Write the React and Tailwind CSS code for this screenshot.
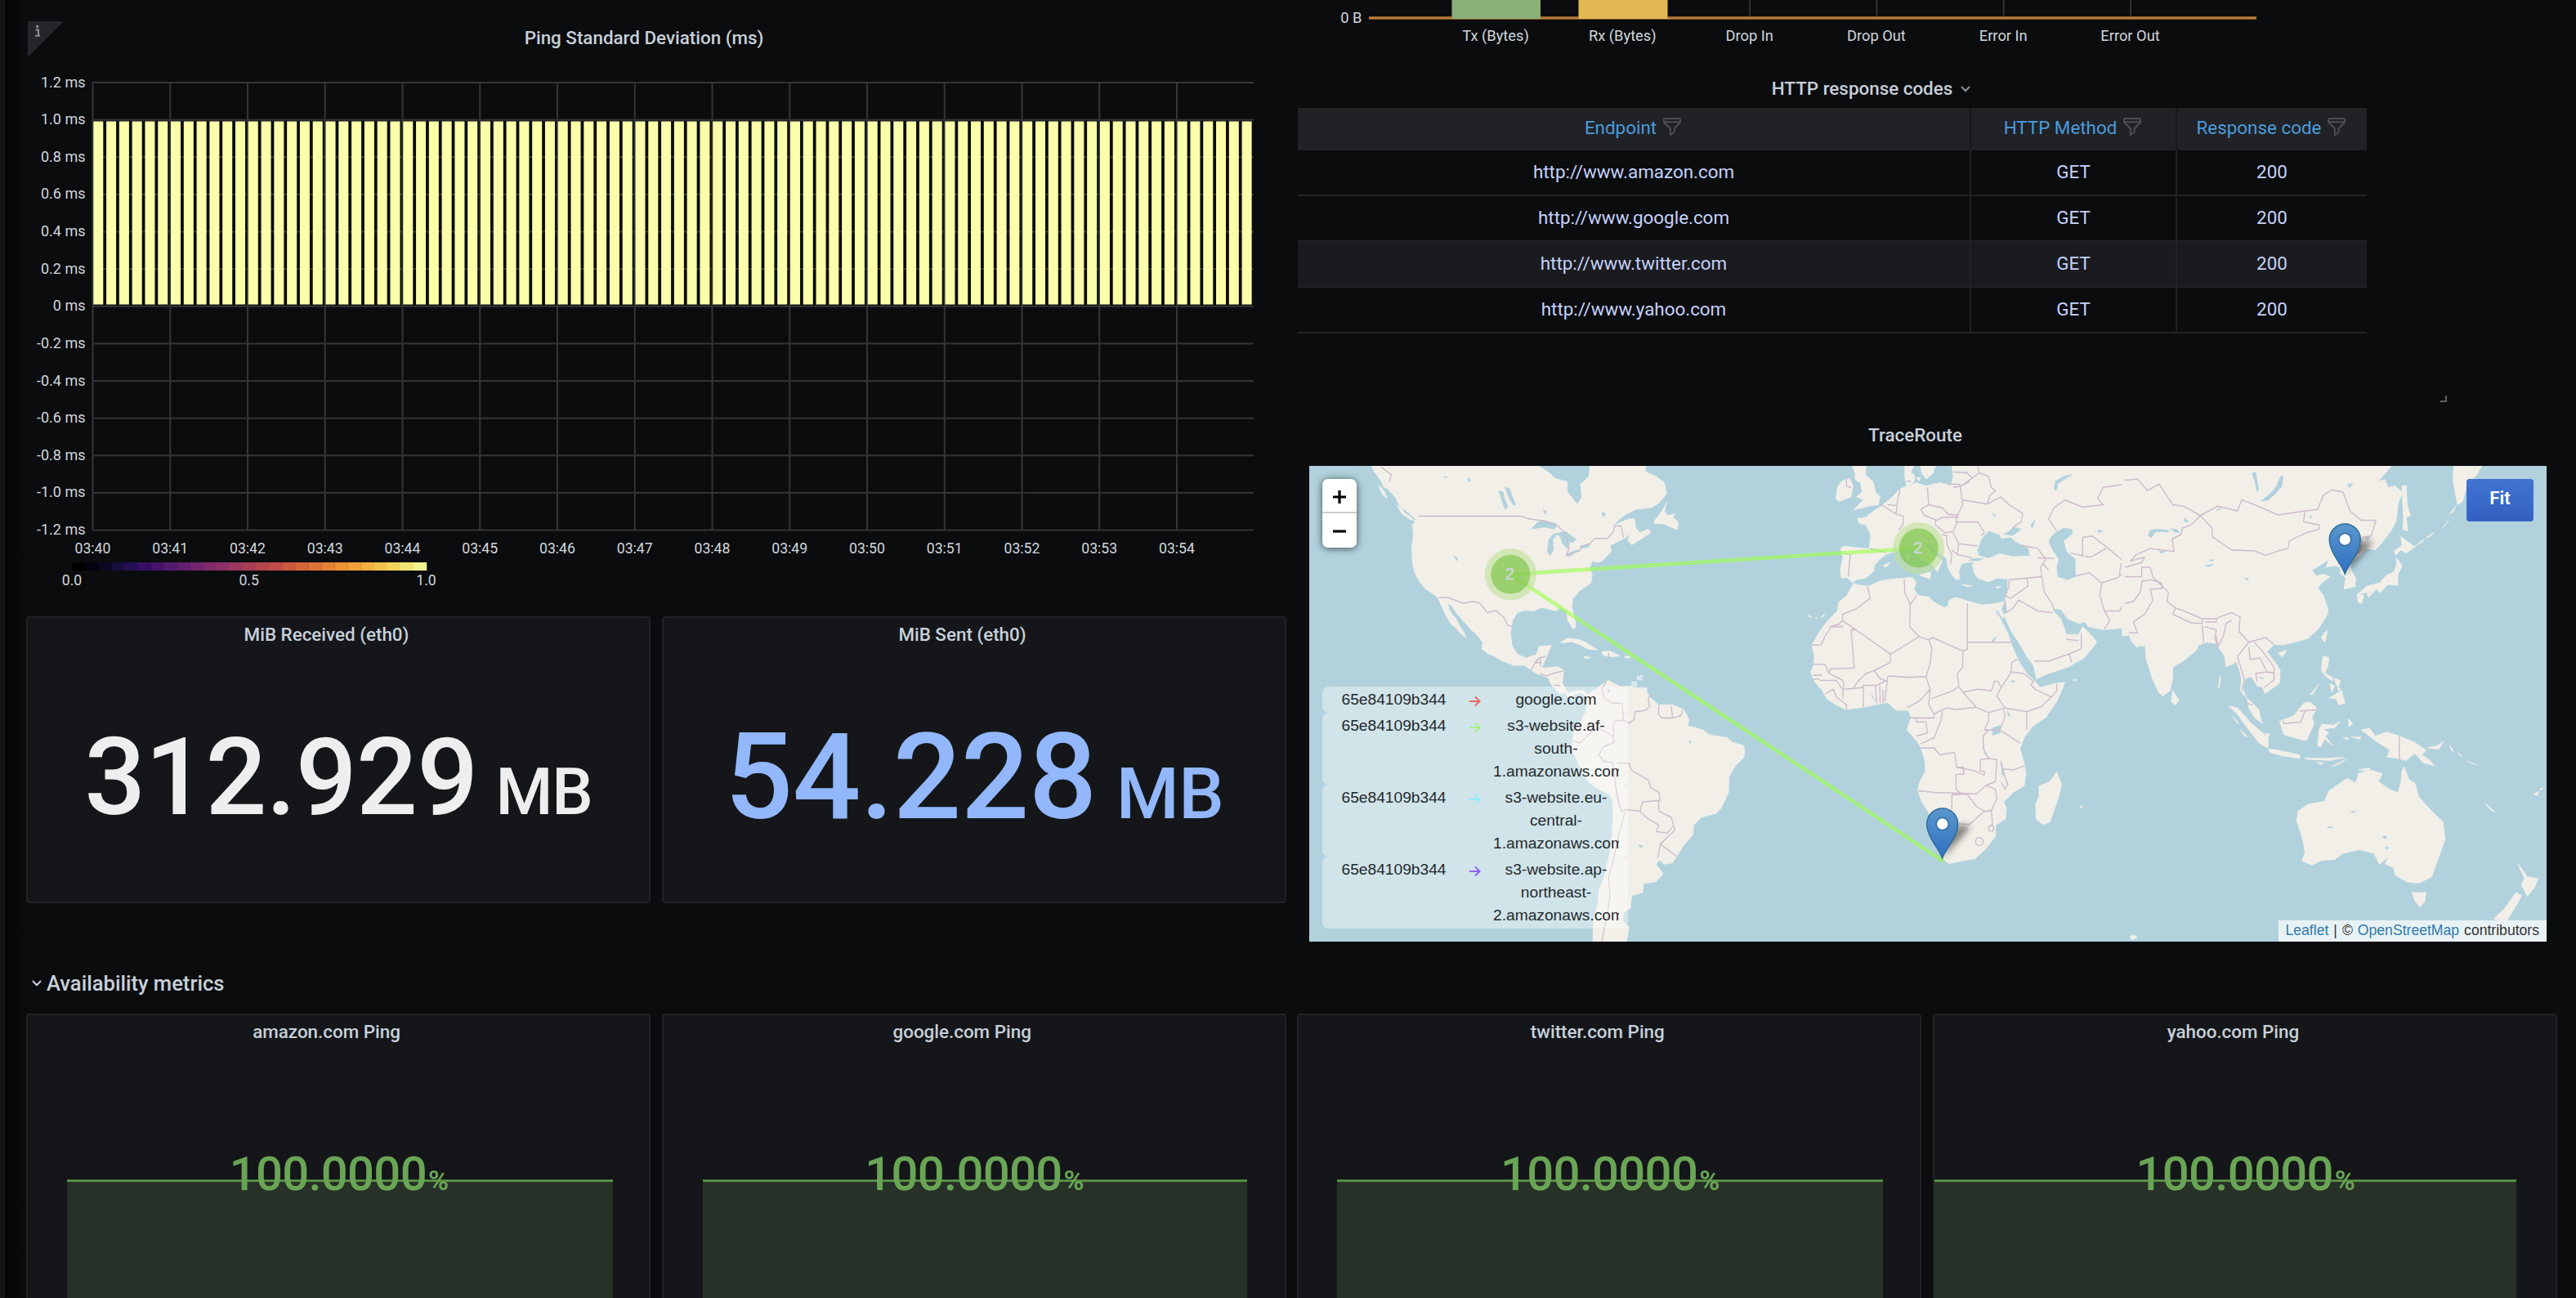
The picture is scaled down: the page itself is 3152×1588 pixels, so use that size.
import React from "react";

const times = Array.from({ length: 15 }, (_, i) => `03:${40 + i}`);
const levels = ["1.2", "1.0", "0.8", "0.6", "0.4", "0.2", "0", "-0.2", "-0.4", "-0.6", "-0.8", "-1.0", "-1.2"];
const scale = [
  "#000003", "#04030f", "#0b0822", "#180f3c", "#260e55", "#360f62", "#451469", "#53196d", "#611f6e",
  "#70256d", "#7f2a6a", "#8d3064", "#9b375e", "#a83e55", "#b5454b", "#c14e46", "#cc593f", "#d66538",
  "#de7337", "#e68233", "#ec9134", "#f1a03a", "#f1b040", "#f2c24b", "#f2d35c", "#f1e474", "#f1f58f",
];

const Chevron = ({ className }) => (
  <svg viewBox="0 0 12 12" className={className} fill="none" stroke="currentColor" strokeWidth="2" strokeLinecap="round" strokeLinejoin="round">
    <path d="M1.5 3.500 6 8.200l4.500-4.700" />
  </svg>
);

const Funnel = () => (
  <svg viewBox="0 0 22 22" className="h-[22px] w-[22px] shrink-0 text-[#4a4e54]" fill="none" stroke="currentColor" strokeWidth="2" strokeLinejoin="round">
    <path d="M2.200 1h17.600q1.200 0 1.200 1.200V5.500L13.700 13.200V17.500L8.800 21V13.200L1 5.500V2.200Q1 1 2.200 1zM1.500 5.200h19" />
  </svg>
);

function Panel({ title, className = "", children }) {
  return (
    <section className={`flex flex-col overflow-hidden rounded-[4px] border-2 border-[#202226] bg-[#141619] ${className}`}>
      <h2 className="mt-1 h-[33px] pr-[29px] text-center text-[22.4px] leading-8 font-medium text-[#c7d0d9]">{title}</h2>
      {children}
    </section>
  );
}

function PingChart() {
  const x0 = 113.5;
  const step = 94.75;
  return (
    <svg className="block h-[650px] w-[1542px]" viewBox="32 76 1542 650" fontSize="17.6" fill="#d0d7de" stroke="none">
      {levels.map((l, i) => {
        const y = 101 + i * 45.63;
        return (
          <g key={l} fontSize="18">
            <rect x="113" y={y - 1} width="1421" height="2" fill="#333538" />
            <text x="104.500" y={y + 5.500} textAnchor="end">{l} ms</text>
          </g>
        );
      })}
      {times.map((t, i) => (
        <g key={t}>
          <rect x={x0 + i * step - 1} y="101" width="2" height="547" fill="#333538" />
          <text x={x0 + i * step} y="677" textAnchor="middle">{t}</text>
        </g>
      ))}
      {Array.from({ length: 90 }, (_, i) => (
        <rect key={i} x={x0 + 0.8 + i * 15.79} y="148.500" width="12" height="224" fill="#fcffa9" />
      ))}
      {scale.map((c, i) => (
        <rect key={c} x={88 + i * 16.074} y="688" width="16.3" height="10" fill={c} />
      ))}
      <g textAnchor="middle">
        <text x="88" y="716">0.0</text>
        <text x="304.600" y="716">0.5</text>
        <text x="521.500" y="716">1.0</text>
      </g>
    </svg>
  );
}

function BytesChart() {
  const labels = ["Tx (Bytes)", "Rx (Bytes)", "Drop In", "Drop Out", "Error In", "Error Out"];
  return (
    <svg className="block h-[62px] w-[1310px]" viewBox="1588 0 1310 62" fontSize="18.3" fill="#d0d7de">
      {labels.map((l, i) => (
        <g key={l}>
          <rect x={1829.500 + i * 155.3} y="0" width="2" height="22" fill="#303235" />
          <text x={1830 + i * 155.3} y="49.500" textAnchor="middle">{l}</text>
        </g>
      ))}
      <rect x="1675" y="20" width="1086" height="4" fill="#8a5c30" />
      <rect x="1675" y="21" width="1086" height="2" fill="#b87a3c" />
      <rect x="1776.500" y="0" width="108.500" height="23" fill="#8ab078" />
      <rect x="1931.500" y="0" width="109" height="23" fill="#e3b752" />
      <text x="1666.500" y="27.500" textAnchor="end">0 B</text>
    </svg>
  );
}

const rows = ["http://www.amazon.com", "http://www.google.com", "http://www.twitter.com", "http://www.yahoo.com"];
const cols = "grid grid-cols-[824px_252px_232px] text-center text-[22.4px]";

function ResponseTable() {
  return (
    <div className="w-[1308px]">
      <div className={`${cols} h-[52px] bg-[#202226] text-[#4d9bdc]`}>
        {["Endpoint", "HTTP Method", "Response code"].map((h, i) => (
          <div key={h} className={`flex items-center justify-center gap-2 pr-0.5 pb-[3px] ${i < 2 ? "border-r-2 border-[#17181b]" : ""}`}>
            {h}
            <span className="pb-[3px]">
              <Funnel />
            </span>
          </div>
        ))}
      </div>
      {rows.map((r, i) => (
        <div key={r} className={`${cols} h-14 border-b-2 border-[#202226] leading-[53px] text-[#c5d2fb] ${i === 2 ? "bg-[#1a1b1f]" : ""}`}>
          <div className="border-r-2 border-[#202226]">{r}</div>
          <div className="border-r-2 border-[#202226]">GET</div>
          <div>200</div>
        </div>
      ))}
    </div>
  );
}

const americas = {
  land: "M265 26L275 45 300 75 310 95 325 100 340 115 355 130 365 150 385 175 410 190 425 205 415 215 418 250 412 290 415 340 425 370 440 395 465 422 490 435 505 445 512 455 525 480 535 500 555 530 575 545 590 560 612 577 605 560 590 540 575 515 560 500 550 485 545 465 560 475 575 495 595 515 625 545 655 570 672 590 670 612 690 625 715 635 745 650 790 665 825 663 850 678 870 690 890 695 915 705 920 720 940 740 955 755 975 750 985 765 1000 768 1010 757 1030 752 1050 762 1058 772 1055 790 1050 815 1035 840 1010 870 1003 900 1002 935 1020 970 1040 1010 1065 1040 1100 1060 1140 1078 1150 1100 1152 1150 1148 1200 1140 1260 1130 1300 1115 1350 1100 1380 1095 1430 1080 1470 1077 1550 1200 1550 1210 1500 1185 1480 1190 1455 1215 1440 1220 1400 1260 1390 1262 1362 1310 1355 1335 1330 1310 1300 1320 1285 1340 1300 1370 1295 1388 1270 1410 1240 1445 1205 1447 1175 1475 1150 1530 1137 1548 1120 1560 1098 1575 1070 1577 1020 1600 985 1630 960 1635 940 1630 920 1590 910 1570 895 1530 890 1505 885 1480 870 1450 862 1425 858 1430 835 1410 805 1370 790 1320 790 1290 770 1275 750 1275 735 1240 735 1210 730 1180 732 1150 720 1135 712 1110 725 1090 740 1075 745 1060 758 1045 745 1010 745 985 752 965 720 970 680 950 668 900 672 890 670 905 640 925 600 880 603 870 630 830 640 800 628 780 600 775 560 782 520 800 495 830 488 860 490 890 478 940 490 960 478 980 490 985 520 1005 548 1015 540 1010 510 1000 480 1003 450 1030 425 1070 400 1075 375 1065 350 1075 330 1095 335 1110 330 1145 300 1140 280 1165 270 1200 255 1215 240 1205 265 1220 278 1250 262 1290 240 1280 228 1250 240 1235 225 1230 195 1210 195 1170 210 1145 225 1170 200 1200 180 1235 165 1290 160 1320 145 1348 115 1340 80 1310 60 1270 45 1270 26zM1348 142L1335 165 1305 200 1300 210 1340 212 1370 225 1388 230 1390 205 1370 190 1380 180 1350 185 1340 170zM358 152L395 172 432 200 405 198 375 178zM290 88L310 105 322 130 305 118zM958 590L985 577 1020 580 1050 590 1095 615 1060 612 1030 598 1000 588 970 592zM1110 620L1140 618 1175 633 1150 637 1115 632zM1045 636L1068 638 1065 642 1046 640zM1195 634L1215 636 1212 641 1195 639z",
  lakes: "M880 26L915 45 940 65 985 75 985 110 1000 125 1020 147 1035 125 1030 85 1060 60 1065 26zM852 228L870 210 892 200 945 212 937 228 900 222zM915 262L930 245 950 240 930 262 932 295 920 313 910 300zM945 242L975 235 1018 262 1000 272 992 268 985 292 965 275 960 258zM975 312L1000 300 1030 293 990 316zM1030 283L1068 275 1060 286 1032 290zM732 105L748 110 752 130 765 155 755 165 742 135zM755 95L770 98 782 125 795 150 785 152 765 120zM565 312L582 322 578 330zM895 165L908 172 902 182zM1130 738L1140 742 1135 752zM1110 175L1125 178 1115 190zM615 65L630 70 622 78zM530 60L545 62 532 65zM1245 1238L1260 1240 1255 1248zM1430 905L1440 910 1434 915z",
  borders: "M435 187H815L840 195 905 203 950 220 980 245 990 290 980 312 1030 297 1035 283 1065 275 1085 258 1130 258 1150 240 1158 218 1180 218 1190 255M512 447H545L600 465 635 460 660 463 690 495 720 488 750 510 765 535 783 540M850 680L865 655 880 640 903 635M885 640V668M885 690L905 698 930 690 968 682M935 728H958M865 655H890M1135 625V640M300 30L338 55 330 75M1125 718L1110 740 1120 770 1150 785 1185 785 1190 840M1160 840L1190 840 1210 848 1228 838 1232 812 1270 808 1285 795 1280 770 1290 755M1320 790L1318 820 1330 832 1370 832 1365 795M1370 832L1400 825 1405 808M1160 840L1150 860 1155 890M1005 905L1030 912 1080 870 1095 862 1150 890 1155 910 1115 925 1100 950 1115 970 1150 975 1165 1080 1180 1130M1165 975L1210 978 1220 1000 1280 1030 1290 1055 1320 1070 1325 1100M1160 1050L1180 1130 1200 1125 1250 1130 1260 1100 1318 1096 1320 1130 1365 1150 1378 1190 1325 1235 1315 1280M1250 1130L1280 1155 1320 1175 1310 1195 1350 1200 1370 1180M1325 1235L1385 1275M1195 1135L1180 1180 1165 1230 1155 1280 1135 1340 1140 1400 1130 1460 1110 1547",
};

const africaEurope = {
  land: "M700 90L735 80 770 90 820 80 862 88 870 60 865 26H1570V603L1540 600 1520 575 1530 565 1490 545 1420 550 1365 540 1355 525 1330 530 1290 515 1265 485 1240 482 1240 492 1265 515 1278 545 1285 565 1330 565 1345 540 1380 570 1397 590 1375 615 1350 640 1290 670 1220 690 1175 707 1165 665 1140 635 1110 590 1080 550 1055 500 1045 485 1055 465 1070 430 1070 388 1030 385 1000 397 960 385 948 370 940 345 945 332 920 335 900 340 890 365 895 388 880 390 865 375 850 350 845 320 810 300 780 270 770 280 800 310 830 330 822 345 812 365 790 340 760 330 725 300 700 285 675 290 660 300 625 308 600 325 580 345 580 360 550 385 515 390 500 400 480 383 460 385 455 360 465 320 457 290 470 282 520 288 562 290 567 245 550 215 525 210 518 195 550 190 570 175 605 155 640 130 675 100zM692 26H725L715 45 730 60 725 78 700 92 692 60zM750 26H805L795 50 770 68 755 50zM735 65L750 62 745 75zM745 375L785 388 788 365zM1062 460L1045 462 1010 468 975 470 940 462 910 455 880 446 855 455 850 475 835 478 800 462 780 445 740 440 725 420 735 400 720 382 690 385 640 388 600 395 560 410 530 408 505 402 495 415 480 440 450 462 445 490 410 520 380 555 350 600 360 630 358 665 347 685 360 715 390 745 405 770 440 790 475 805 540 798 595 788 630 783 650 800 665 808 705 808 715 830 700 870 735 905 750 925 765 965 768 1000 745 1040 740 1065 755 1100 780 1135 795 1180 815 1230 835 1285 855 1298 910 1288 950 1282 990 1250 1025 1210 1025 1175 1062 1155 1065 1120 1055 1100 1090 1070 1130 1050 1137 1010 1130 975 1115 930 1130 895 1160 860 1210 830 1250 780 1280 718 1240 722 1190 735 1170 715 1140 690 1110 650 1085 600 1070 560 1040 510 1022 487 1035 490 1052 515 1066 490zM500 26H550L548 55 575 75 585 110 602 125 595 150 560 155 505 167 540 135 515 125 535 110 530 80 510 70 510 50zM445 95L460 75 490 66 502 90 495 125 450 140 440 130zM1250 1005L1268 1045 1255 1090 1225 1165 1200 1173 1175 1155 1172 1110 1185 1080 1185 1050 1225 1035zM900 405L940 410 920 413zM1025 414L1045 410 1035 418zM695 305L710 310 708 330 697 325zM612 345L638 335 625 350zM335 505L350 510 345 505zM365 510L372 512 368 514zM385 510L398 498 390 512zM1518 1530L1535 1526 1545 1535 1525 1542zM1310 709H1323V712H1310zM1335 1114H1345V1118H1335z",
  lakes: "M960 295L975 260 1000 235 1040 247 1045 260 1080 255 1100 270 1145 290 1150 312 1090 315 1040 305 1000 320 965 312zM1055 245L1075 235 1090 222 1120 228 1090 248zM925 328L950 322 982 322 960 330zM1225 258L1240 243 1275 225 1308 230 1305 245 1275 265 1285 300 1318 325 1318 380 1290 390 1255 380 1250 350 1258 325 1235 295 1222 270zM1012 865L1045 855 1042 880 1015 888zM1240 100L1245 75 1275 60 1310 52 1280 68 1255 82 1248 105zM1155 215L1172 198 1160 225zM1015 178L1030 188 1018 185zM1400 230L1420 235 1405 240zM1010 588L1028 570 1020 590zM1070 808L1080 828 1070 822zM570 755L582 775 572 765zM1045 975L1055 1010 1050 1020zM980 900L985 940 1000 960 985 945zM1518 160H1528V165H1518zM1085 713H1095V718H1085z",
  borders: "M555 410L565 450 510 485 465 500 463 520 640 628M463 520L450 532 422 540 400 570 385 598 348 600M465 540H415M515 550H495L507 672 420 675 415 690M640 628L745 572 780 582M690 388L692 430 712 470 710 540 745 572M735 440L712 470M780 582L795 575 905 618 922 612V465M922 590H1082M640 628L638 655 580 680 550 690 520 715 505 735M780 582L792 610 785 660 770 700 710 702 630 698 618 780M580 680L600 705 625 715M770 700L785 740 750 775 700 800M905 618V670L885 690 890 730 870 745 790 770M785 740L780 790 800 820 830 805 850 800 880 805 955 798M890 730L905 750 955 798 1000 815 1060 800 1030 762 1045 735M905 750L960 740 1010 745 1022 715 1035 715 1045 735 1080 690 1085 655 1105 645M1080 685L1130 690 1165 715 1155 725 1170 740 1230 765 1195 795 1140 812 1060 800M1230 765L1250 745V722M1140 812V870M1000 815V840L985 870H1040L1115 912M1000 870L980 890V930L1000 962 970 965 968 1000 985 1005V1015M1055 805L1060 825 1045 865M750 928H800L820 950 875 942 882 990 945 1000 985 1015M882 990H908V1012H880V1060L900 1075M740 1065L800 1070 955 1075 990 1048 1025 1035 1030 965 1000 962M865 1125V1078L920 1075 955 1115 985 1130 1010 1128 1030 1090 1025 1060 990 1048M985 1130L930 1172 890 1170M1010 1128L1015 1180M1050 995L1090 998 1132 985M1045 970L1060 1020 1070 1045 1060 1060 1048 1040M710 832H800V820M735 835V845L770 845 775 880 735 890M750 915L800 895 825 840 830 810M358 660L400 662 415 690 465 712 470 740 535 735 540 728 590 728 625 712M355 695H390M355 708H380M380 712H440L465 740V770M540 730V798M585 728L588 785M600 730L602 785M612 740V785M400 755L430 740 440 765 478 790V805M965 1240A14 13 0 1 1 967 1240M1008 1195A9 10 0 1 1 1010 1195M470 305L492 310 485 380M565 290L625 303M605 150L660 180 688 188 685 215 670 230M630 150L660 152M675 100L665 140 660 180M775 95L780 150 750 165 765 185M780 150L830 160 850 180 885 185 905 150 895 85 850 85M765 185L810 200 830 190 890 190M870 95L900 90 940 65 920 48 870 45M960 26L965 48 1000 60 1010 95 1025 105 1005 120 995 148 905 135M900 90L930 75M965 48L940 65M995 148L1045 125 1075 150 1125 178 1120 205 1090 222M885 180L880 205 930 205 960 205 985 240 970 250M805 215L840 240 870 235 885 205M805 215V200M870 240L890 275 960 282M890 275L885 310 940 320M845 250L848 280 865 310 860 340M830 245L850 250M865 295L885 310M700 75H715M478 70V90L495 95M1120 280L1180 290 1210 325 1190 350 1195 380 1140 385 1075 390M1180 320L1240 322M1200 340L1220 360M1140 385L1145 410 1080 450 1060 440M1075 390V410L1060 440M1110 455L1180 490 1235 495M1195 380L1205 430 1235 470 1240 490M1060 455L1065 495 1090 480 1110 455M1168 650L1220 650 1295 628 1305 655M1295 628L1340 610V560M1285 580L1330 585M1318 378L1370 368 1415 400 1408 440 1425 490 1445 520 1425 548M1415 400L1470 385 1500 365 1560 375M1425 490H1480L1500 460 1550 435 1560 400M1250 235L1220 195 1240 160 1280 135 1345 158 1420 150 1400 130 1420 95 1500 85 1540 65H1560M1345 318V255L1380 250 1425 280 1480 320 1530 350M1300 305L1375 318 1430 290M1480 375L1485 340 1560 320",
};

const asiaPacific = {
  land: "M-10 26V570L15 568 25 590 45 607 65 590 72 600 75 640 95 700 120 750 135 762 160 745 170 705 170 670 215 645 255 615 260 600 290 590 330 595 335 610 355 635 358 668 385 660 395 650 408 680 415 710 410 745 435 770 440 800 460 830 488 850 475 805 455 785 430 765 418 735 430 705 450 700 470 730 490 735 498 755 550 720 552 680 530 650 505 620 530 597 565 598 610 588 650 578 690 545 720 500 722 485 705 440 685 415 700 400 730 380 705 372 680 378 665 360 700 340 725 325 715 350 745 345 765 350 765 370 785 385 778 420 818 412 820 385 805 360 800 335 840 310 855 290 890 295 915 270 945 235 965 200 970 150 985 110 960 90 935 95 925 70 900 75 920 55 948 26zM985 90L1000 90 1003 150 1015 185 1000 190 1005 235 988 230 990 190 985 120zM980 252L1030 285 1000 305 980 295 962 312 958 297 985 280zM965 320L985 345 970 375 970 408 935 405 905 432 895 420 870 430 830 435 860 410 905 400 930 375 955 365 965 345zM825 435L850 440 840 468 828 460zM860 435L890 425 865 446zM718 550L697 575 710 590 718 565zM545 625L575 615 560 637zM170 745L192 775 180 790 165 780zM705 633L725 640 722 665 710 690 735 700 740 715 715 700 698 680 700 660zM725 768L770 745 782 785 760 790 750 770zM728 722L745 730 735 750zM745 705L765 712 760 735 750 725zM755 735L768 740 760 745zM658 758L690 722 668 755zM368 793L400 800 450 850 510 895 508 928 480 915 440 870 400 820zM510 930L560 938 620 950 622 962 560 953 515 942zM640 960L700 962 780 958 730 968 645 964zM735 987L790 962 760 980zM680 972L705 976 695 981zM550 842L600 825 635 785 655 780 682 800 665 830 672 850 645 905 600 895 565 885zM690 870L700 852 740 855 765 843 745 863 705 867 725 880 712 890 737 920 710 900 695 925 685 920zM840 870L870 865 890 890 930 877 975 890 1030 910 1070 935 1055 950 1080 965 1100 985 1060 975 1030 945 1000 968 960 960 930 957 942 935 890 905zM1075 928L1110 920 1132 908 1115 932zM795 835L810 850 795 860zM775 895H795L790 902zM805 893H840L835 900zM1155 920L1170 940 1160 935zM1180 940L1200 955 1190 950zM1215 970L1250 982 1230 976zM615 1130L650 1108 710 1098 725 1065 790 1025 820 1040 830 1010 870 998 915 1010 900 1035 940 1060 970 1072 980 1040 985 1000 992 988 1010 1030 1030 1040 1045 1085 1085 1125 1130 1165 1138 1220 1110 1290 1090 1340 1045 1360 1005 1357 960 1335 955 1310 925 1300 935 1275 905 1300 885 1265 835 1253 775 1265 745 1285 700 1287 665 1303 630 1290 640 1260 630 1215 610 1160zM830 998L870 992 865 1000zM1020 1390L1070 1390 1065 1420 1048 1437 1030 1415zM1395 1297L1415 1320 1430 1340 1468 1345 1455 1375 1430 1402 1408 1365 1420 1345zM1390 1390L1410 1400 1385 1440 1355 1483 1310 1475 1350 1440zM1278 1103L1315 1132 1300 1126zM1170 26H1268L1250 55 1215 90 1200 140 1182 150 1170 95 1165 60zM1452 1075L1470 1068 1465 1080zM1472 1060L1488 1055 1480 1062zM1030 284L1060 262 1058 268zM1070 256L1098 238 1085 252zM1130 225L1150 200zM1155 180L1175 155 1168 172zM332 735L338 697 340 710 335 735zM385 828L405 850 395 845zM410 870L425 890 435 892 420 878zM500 880L518 885 505 892z",
  lakes: "M562 58L558 90 535 115 510 135 482 140 520 112 540 90 552 60zM82 250L90 232 115 228 155 232 155 238 110 236 95 255zM160 228H185L195 240 180 238zM120 300L145 298 130 306zM285 345L315 340 300 348zM300 328L318 325 308 332zM425 385L440 385 435 392zM452 50L465 45 475 100 470 110 462 75zM210 190L228 205 212 205zM325 165L345 160 330 168zM655 190L665 182 660 195zM792 85L810 82 798 97zM480 700L492 705 484 708zM918 1210H930V1217H918zM925 1245H936V1250H925zM805 1130H818V1134H805zM720 1180H738V1183H720zM855 255H868V262H857z",
  borders: "M0 72L45 68 80 105 122 85 170 150 210 155 268 185 235 215 205 225 200 245 168 260 175 300 90 290 40 310 20 330 70 318 60 335 0 350M268 185L330 155 400 170 415 135 460 150 545 183 640 170 635 205 690 215 690 228 645 240 585 265 580 290 555 295 500 312 460 298 380 295 310 252 310 225 268 185M640 170L685 165 705 120 735 103 775 110 800 170 840 200 892 200 875 250 845 255 835 300 755 340M0 380L60 380 60 350 90 350 100 382 155 430 150 460 180 480 210 490 275 515 325 515 340 508 380 495 410 510 405 555 440 590 400 635 415 680 425 710 415 745M130 400L90 390 60 395 55 430 30 460 0 465M130 400L132 418 90 420 100 455 70 500 30 525 45 560 15 560M180 480L170 500 235 528 275 530V515M285 525H325V513M275 535L280 590M285 540L325 550 320 575 330 605 350 570 360 530 380 520M330 605L325 570M440 590L460 585 500 575 530 597M440 605L445 645 480 640 505 685 530 688M460 590L490 620 530 670 530 710 495 735M470 715L465 690 505 685M430 785L455 790M560 840L565 850 625 845 640 808 680 806M620 810L640 808M975 890V965",
};

const MapLayer = ({ data, transform }) => (
  <g transform={transform}>
    <path d={data.land} fill="#f2efe9" stroke="#f2efe9" strokeWidth="2" strokeLinejoin="round" />
    <path d={data.lakes} fill="#b1d2dd" stroke="#b1d2dd" strokeWidth="1.500" strokeLinejoin="round" />
    <path d={data.borders} fill="none" stroke="#cdbccb" strokeWidth="4" strokeLinejoin="round" />
  </g>
);

const Pin = ({ x, y }) => (
  <g transform={`translate(${x} ${y})`}>
    <path d="M0 0L34 -38Q20 -46 8 -28z" fill="#000" opacity="0.5" filter="url(#soft)" />
    <path d="M0 0C-4 -12 -19 -26 -19 -42A19 19 0 0 1 19 -42C19 -26 4 -12 0 0z" fill="url(#pin)" stroke="#2e6c97" strokeWidth="1.500" />
    <circle cx="0" cy="-42" r="7.500" fill="#fff" stroke="#2e6c97" strokeWidth="1.500" />
  </g>
);

const Cluster = ({ x, y }) => (
  <g>
    <circle cx={x} cy={y} r="31.600" fill="#bee097" fillOpacity="0.6" />
    <circle cx={x} cy={y} r="24" fill="#6cc032" fillOpacity="0.55" />
    <text x={x - 1} y={y + 6.500} textAnchor="middle" fontSize="20" fill="#ccd4dc" stroke="#ccd4dc" strokeWidth="0.600" className="font-['Liberation_Sans',sans-serif]">2</text>
  </g>
);

const hops = [
  { color: "#ec6a63", lines: ["google.com"] },
  { color: "#a6ef82", lines: ["s3-website.af-", "south-", "1.amazonaws.com"] },
  { color: "#8ff0fb", lines: ["s3-website.eu-", "central-", "1.amazonaws.com"] },
  { color: "#8f63f2", lines: ["s3-website.ap-", "northeast-", "2.amazonaws.com"] },
];

function TraceMap() {
  return (
    <div className="relative h-[582px] w-[1514px] overflow-hidden bg-[#b1d2dd] font-['Liberation_Sans',sans-serif]">
      <svg className="block h-full w-full" viewBox="1602 570 1514 582">
        <defs>
          <linearGradient id="pin" x1="0" y1="0" x2="0" y2="1">
            <stop offset="0" stopColor="#5a97cc" />
            <stop offset="1" stopColor="#2f6fc4" />
          </linearGradient>
          <filter id="soft" x="-50%" y="-50%" width="200%" height="200%">
            <feGaussianBlur stdDeviation="4" />
          </filter>
        </defs>
        <MapLayer data={americas} transform="translate(1590 560) scale(0.33333 0.38265)" />
        <MapLayer data={africaEurope} transform="translate(2100 560) scale(0.33333 0.38265)" />
        <MapLayer data={asiaPacific} transform="translate(2600 560) scale(0.34439 0.38265)" />
        <path d="M2347.700 670.600L1848.300 702.700 2376.700 1053" fill="none" stroke="#9eff50" strokeOpacity="0.65" strokeWidth="4.800" strokeLinecap="round" />
        <Cluster x={1848.3} y={702.7} />
        <Cluster x={2347.7} y={670.6} />
        <Pin x={2376.7} y={1050} />
        <Pin x={2869.3} y={702} />
        <path d="M1996 840l6-5m0 5v-5h-6M2010 826l-6 5m0-5v5h6" fill="none" stroke="#dcebf0" strokeWidth="2.500" />
      </svg>

      <div className="absolute top-4 left-4 flex h-[84px] w-[42px] flex-col rounded-[7px] bg-white shadow-[0_1px_10px_rgba(0,0,0,0.65)]">
        <div className="flex h-[42px] items-center justify-center border-b-2 border-[#ccc] pt-[3px]">
          <svg viewBox="0 0 16 16" className="h-4 w-4"><path d="M8 0v16M0 8h16" stroke="#000" strokeWidth="3.200" /></svg>
        </div>
        <div className="flex flex-1 items-center justify-center pb-px">
          <svg viewBox="0 0 16 16" className="h-4 w-4"><path d="M0 9h16" stroke="#000" strokeWidth="3.200" /></svg>
        </div>
      </div>

      <button className="absolute top-4 right-4 flex h-[52px] w-[82px] items-center justify-center rounded-[3px] border border-[#3e6fd0] bg-linear-to-b from-[#4274d2] to-[#3260c2] pb-1 font-['Roboto',sans-serif] text-[22.4px] font-semibold text-white">
        Fit
      </button>

      <div className="absolute bottom-4 left-4 w-[374px] text-[19.2px] leading-7 text-[#25292c]">
        {hops.map((h) => (
          <div key={h.color} className="flex rounded-[8px] bg-white/40 pt-0.5 pb-0.5">
            <div className="w-[175px] text-center">65e84109b344</div>
            <svg viewBox="0 0 14 14" className="mt-[9px] ml-[5px] h-[14px] w-[14px] shrink-0" fill="none" stroke={h.color} strokeWidth="2">
              <path d="M0 7h12M7 1.500L12.500 7 7 12.500" />
            </svg>
            <div className="ml-[15px] w-[154px] overflow-hidden text-center whitespace-nowrap">
              {h.lines.map((l) => (
                <div key={l}>{l}</div>
              ))}
            </div>
          </div>
        ))}
      </div>

      <div className="absolute right-0 bottom-0 flex h-[26px] items-center gap-1.5 bg-white/70 pr-[9px] pl-2 pb-0.5 text-[17.6px] whitespace-nowrap text-[#333]">
        <span className="text-[#2f7bab]">Leaflet</span>
        <span>|</span>
        <span>©</span>
        <span className="text-[#2f7bab]">OpenStreetMap</span>
        <span>contributors</span>
      </div>
    </div>
  );
}

const pings = [
  { name: "amazon.com Ping", pad: "ml-[48px] w-[668px]" },
  { name: "google.com Ping", pad: "ml-[48px] w-[666px]" },
  { name: "twitter.com Ping", pad: "ml-[47px] w-[668px]" },
  { name: "yahoo.com Ping", pad: "ml-0 w-[712px]" },
];

export default function App() {
  return (
    <div className="flex h-[1588px] w-[3152px] overflow-hidden bg-[#0b0c0e] font-['Roboto',sans-serif]">
      <div className="w-1.5 shrink-0 bg-[#141619]" />
      <div className="w-[26px] shrink-0 bg-linear-to-r from-[#040506] to-[#0b0c0e]" />
      <div className="w-[3098px] shrink-0">
        <div className="flex h-[1105px]">
          <div className="w-[1542px]">
            <div className="flex h-[76px] pt-[26px]">
              <svg viewBox="0 0 44 44" className="ml-0.5 h-11 w-11 shrink-0">
                <path d="M0 0h44L0 44z" fill="#24262b" />
                <path d="M9.500 10.500h3.500v7M9 17.700h6" stroke="#8e9094" strokeWidth="2" fill="none" />
                <rect x="10.200" y="5" width="3" height="3" fill="#8e9094" />
              </svg>
              <h2 className="mt-1 h-8 flex-1 pr-[76px] text-center text-[22.4px] leading-8 font-medium text-[#c7d0d9]">Ping Standard Deviation (ms)</h2>
            </div>
            <PingChart />
            <div className="mt-7 grid grid-cols-2 gap-3.5">
              <Panel title="MiB Received (eth0)" className="h-[351px]">
                <div className="flex items-baseline justify-center gap-[22px] pt-[19px] leading-[280px] font-medium text-[#eeeeee]">
                  <span className="text-[132px] tracking-[-0.8px]">312.929</span>
                  <span className="text-[80px] tracking-[-1px]">MB</span>
                </div>
              </Panel>
              <Panel title="MiB Sent (eth0)" className="h-[351px]">
                <div className="flex items-baseline justify-center gap-[24px] pt-[19px] leading-[280px] font-medium text-[#92b7fb]">
                  <span className="text-[147px] tracking-[-0.6px]">54.228</span>
                  <span className="text-[88px] tracking-[-0.5px]">MB</span>
                </div>
              </Panel>
            </div>
          </div>

          <div className="ml-3.5 w-[1542px]">
            <BytesChart />
            <div className="relative h-[430px]">
              <h2 className="flex h-[70px] w-[1403px] items-center justify-center gap-2.5 pt-[24px] text-[22.4px] font-medium text-[#c7d0d9]">
                HTTP response codes
                <Chevron className="h-3 w-3 text-[#8e9094]" />
              </h2>
              <ResponseTable />
              <svg viewBox="0 0 8 8" className="absolute top-[422px] left-[1398px] h-2 w-2"><path d="M7 0v7H0" fill="none" stroke="#5e5f61" strokeWidth="2" /></svg>
            </div>
            <h2 className="mt-[24px] h-[54px] pr-[31px] text-center text-[22.4px] leading-8 font-medium text-[#c7d0d9]">TraceRoute</h2>
            <div className="ml-3.5">
              <TraceMap />
            </div>
          </div>
        </div>

        <div className="flex h-[135px] items-center pt-[63px] pb-[2px] pl-[7px] text-[25.6px] font-medium text-[#c7d0d9]">
          <Chevron className="mr-[6px] h-3 w-3" />
          Availability metrics
        </div>

        <div className="grid w-[3097px] grid-cols-4 gap-[13.5px]">
          {pings.map((p) => (
            <Panel key={p.name} title={p.name} className="h-[360px]">
              <div className={`mt-[164px] h-[200px] shrink-0 border-t-[3px] border-[#568c45] bg-[#273127] ${p.pad}`} />
              <div className="-mt-[243px] flex items-baseline justify-center gap-0.5 leading-[72px] font-medium text-[#6aa556]">
                <span className="text-[58px] tracking-[-0.7px]">100.0000</span>
                <span className="text-[34px] font-semibold tracking-[-1.5px]">%</span>
              </div>
            </Panel>
          ))}
        </div>
      </div>
    </div>
  );
}
